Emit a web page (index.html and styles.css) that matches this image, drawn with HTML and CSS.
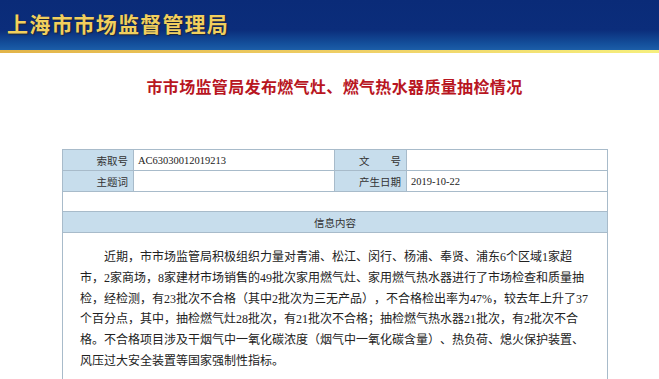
FILE: index.html
```html
<!DOCTYPE html>
<html lang="zh-CN">
<head>
<meta charset="utf-8">
<title>上海市市场监督管理局</title>
<link rel="stylesheet" href="styles.css">
</head>
<body>
<header class="banner">
  <h1 class="site-name">上海市市场监督管理局</h1>
</header>
<div class="gold-line"></div>
<main class="wrap">
  <h2 class="article-title">市市场监管局发布燃气灶、燃气热水器质量抽检情况</h2>
  <table class="meta">
    <colgroup>
      <col class="c-label"><col class="c-value"><col class="c-label2"><col class="c-value2">
    </colgroup>
    <tr>
      <td class="label">索取号</td>
      <td class="value">AC63030012019213</td>
      <td class="label">文　　号</td>
      <td class="value"></td>
    </tr>
    <tr>
      <td class="label">主题词</td>
      <td class="value"></td>
      <td class="label">产生日期</td>
      <td class="value">2019-10-22</td>
    </tr>
    <tr class="blank">
      <td colspan="4"></td>
    </tr>
    <tr>
      <td class="section" colspan="4">信息内容</td>
    </tr>
    <tr>
      <td class="content" colspan="4">
        <p>近期，市市场监管局积极组织力量对青浦、松江、闵行、杨浦、奉贤、浦东6个区域1家超市，2家商场，8家建材市场销售的49批次家用燃气灶、家用燃气热水器进行了市场检查和质量抽检，经检测，有23批次不合格（其中2批次为三无产品），不合格检出率为47%，较去年上升了37个百分点，其中，抽检燃气灶28批次，有21批次不合格；抽检燃气热水器21批次，有2批次不合格。不合格项目涉及干烟气中一氧化碳浓度（烟气中一氧化碳含量）、热负荷、熄火保护装置、风压过大安全装置等国家强制性指标。</p>
      </td>
    </tr>
  </table>
</main>
</body>
</html>
```

FILE: styles.css
```css
html, body {
  margin: 0;
  padding: 0;
  background: #ffffff;
}

body {
  font-family: "Noto Sans CJK SC", sans-serif;
  color: #222;
  text-autospace: no-autospace;
  text-spacing-trim: space-all;
}

.banner {
  height: 50px;
  background: linear-gradient(to bottom, #0a2b78 0%, #0b2d7b 60%, #14509c 88%, #1c5ea8 100%);
}

.site-name {
  margin: 0;
  padding-left: 7px;
  font-size: 21px;
  line-height: 46px;
  font-weight: 700;
  letter-spacing: 1.2px;
  color: #f1cf5e;
  text-shadow: 1px 1px 1px rgba(40, 25, 0, 0.6);
}

.gold-line {
  height: 3px;
  background: linear-gradient(to right, #e2b449 0%, #efd067 55%, #f6ef7d 100%);
}

.wrap {
  margin-left: 62px;
  width: 545px;
}

.article-title {
  margin: 0;
  padding-top: 23px;
  height: 96px;
  box-sizing: border-box;
  text-align: center;
  font-size: 16px;
  line-height: 20px;
  font-weight: 700;
  letter-spacing: 0.35px;
  color: #b8161f;
}

.meta {
  width: 545px;
  border-collapse: collapse;
  table-layout: fixed;
}

.c-label { width: 71px; }
.c-value { width: 201px; }
.c-label2 { width: 72px; }
.c-value2 { width: 201px; }

.meta td {
  border: 1px solid #a8bbca;
  height: 20px;
  padding: 0;
  vertical-align: middle;
}

.meta .label {
  background: #c7ddec;
  text-align: right;
  padding-right: 5px;
  font-size: 10.5px;
  color: #333;
}

.meta .value {
  padding-left: 4px;
  font-family: "Liberation Serif", "Noto Sans CJK SC", serif;
  font-size: 10.5px;
  color: #222;
}

.meta .blank td {
  height: 19px;
}

.meta .section {
  background: #c7ddec;
  text-align: center;
  font-size: 10.5px;
  color: #333;
}

.meta .content {
  padding: 14px 17px 20px 17px;
  vertical-align: top;
}

.content p {
  margin: 0;
  font-family: "Liberation Serif", "Noto Sans CJK SC", sans-serif;
  font-size: 12px;
  line-height: 20.8px;
  text-indent: 24px;
  color: #222;
}
```
